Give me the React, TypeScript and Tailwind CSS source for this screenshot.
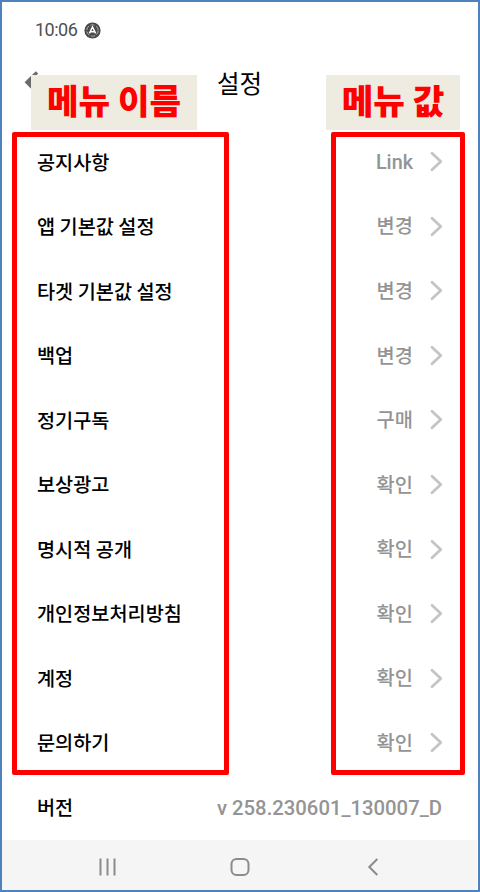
import React from 'react';

type MenuItem = {
  name: string;
  value: string;
};

const menuItems: MenuItem[] = [
  { name: '공지사항', value: 'Link' },
  { name: '앱 기본값 설정', value: '변경' },
  { name: '타겟 기본값 설정', value: '변경' },
  { name: '백업', value: '변경' },
  { name: '정기구독', value: '구매' },
  { name: '보상광고', value: '확인' },
  { name: '명시적 공개', value: '확인' },
  { name: '개인정보처리방침', value: '확인' },
  { name: '계정', value: '확인' },
  { name: '문의하기', value: '확인' },
];

function ChevronRight() {
  return (
    <svg className="ml-[16px] h-[22px] w-[15px]" viewBox="0 0 15 22" fill="none" stroke="#c4c4c4" strokeWidth="2.8" strokeLinecap="round" strokeLinejoin="round">
      <path d="M3 3.2 L11.8 11.5 L3 19.8" />
    </svg>
  );
}

function StatusBar() {
  return (
    <div className="flex h-14 items-center gap-[6px] pl-[33px] font-['Roboto',sans-serif] text-[18px] text-[#505050]">
      <span className="w-[43px] -translate-y-px tracking-[-0.5px]">10:06</span>
      <svg className="h-[17px] w-[17px]" viewBox="0 0 17 17" fill="none">
        <circle cx="8.5" cy="8.5" r="8.1" fill="#4a4a4a" />
        <circle cx="8.5" cy="8.5" r="5.7" stroke="#c8c8c8" strokeWidth="0.8" strokeDasharray="4.4 1.6" />
        <path d="M5.4 11.4 L8.5 4.9 L11.6 11.4 M6.5 9.7 H10.5" stroke="#fff" strokeWidth="1.5" />
      </svg>
    </div>
  );
}

function Header() {
  return (
    <header className="relative flex h-[50px] items-center justify-center">
      <svg className="absolute left-[22px] top-[11px] h-[28px] w-[24px]" viewBox="0 0 24 28" fill="none">
        <path d="M13 3.4 L3 13.3 L13 23.2" stroke="#6b6b6b" strokeWidth="3.4" />
        <path d="M2.5 13.3 L8 8 V18.6 Z" fill="#6b6b6b" />
      </svg>
      <h1 className="-translate-x-[0.5px] text-[24.5px] font-normal text-black">설정</h1>
    </header>
  );
}

function NavBar() {
  return (
    <div className="h-[50px] w-[475px] bg-[#f5f5f5]">
      <svg className="h-[50px] w-[475px]" viewBox="0 0 475 50" fill="none" stroke="#8b8b8b" strokeWidth="2">
        <path d="M98.5 18.5 V35.5 M105.5 18.5 V35.5 M112.5 18.5 V35.5" />
        <rect x="229.5" y="19" width="17" height="16" rx="5" />
        <path d="M375.3 19 L367.3 27 L375.3 35" />
      </svg>
    </div>
  );
}

export default function App() {
  return (
    <div className="relative flex h-[892px] w-[480px] flex-col overflow-hidden border-2 border-[#4f81bd] bg-white font-['Noto_Sans_CJK_KR',sans-serif]">
      <StatusBar />
      <Header />

      <main className="mt-[21px] flex flex-1 flex-col">
        {menuItems.map((item) => (
          <div key={item.name} className="flex h-[64.55px] shrink-0 items-center pl-[35px] pr-[34px]">
            <span className="flex-1 text-[19.7px] font-medium text-black">{item.name}</span>
            <span className="pt-[3px] font-['Roboto','Noto_Sans_CJK_KR',sans-serif] text-[19.8px] font-medium text-[#949494]">{item.value}</span>
            <ChevronRight />
          </div>
        ))}
        <div className="flex h-[64.55px] shrink-0 items-center justify-between pl-[35px] pr-[36px]">
          <span className="text-[19.7px] font-medium text-black">버전</span>
          <span className="pt-[2px] font-['Roboto',sans-serif] text-[20.3px] font-medium text-[#949494]">v 258.230601_130007_D</span>
        </div>
      </main>

      <NavBar />

      {/* Callouts */}
      <div className="absolute left-[29px] top-[73px] flex h-[55px] w-[166px] items-center justify-center bg-[#eeece1] pb-[5px] text-[34.3px] font-black text-[#ff0000]">
        메뉴 이름
      </div>
      <div className="absolute left-[324px] top-[73px] flex h-[55px] w-[134px] items-center justify-center bg-[#eeece1] pb-[5px] text-[34.3px] font-black text-[#ff0000]">
        메뉴 값
      </div>
      <div className="absolute left-[10px] top-[130px] h-[643px] w-[217px] rounded-[2px] border-5 border-[#ff0000]" />
      <div className="absolute left-[329px] top-[130px] h-[643px] w-[134px] rounded-[2px] border-5 border-[#ff0000]" />
    </div>
  );
}
